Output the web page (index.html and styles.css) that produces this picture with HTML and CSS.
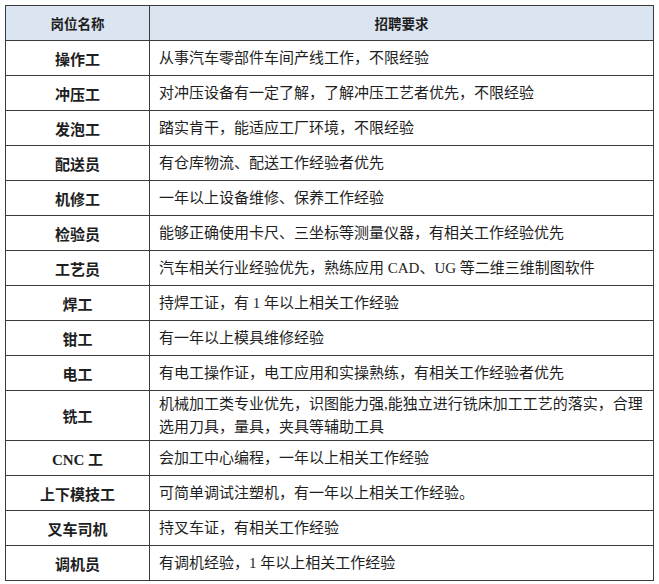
FILE: index.html
```html
<!DOCTYPE html>
<html lang="zh-CN">
<head>
<meta charset="utf-8">
<link rel="stylesheet" href="styles.css">
</head>
<body>
<div class="wrap">
<table class="jobs">
  <thead>
    <tr class="head"><th class="c1">岗位名称</th><th class="c2">招聘要求</th></tr>
  </thead>
  <tbody>
    <tr><td class="name">操作工</td><td class="req">从事汽车零部件车间产线工作，不限经验</td></tr>
    <tr><td class="name">冲压工</td><td class="req">对冲压设备有一定了解，了解冲压工艺者优先，不限经验</td></tr>
    <tr><td class="name">发泡工</td><td class="req">踏实肯干，能适应工厂环境，不限经验</td></tr>
    <tr><td class="name">配送员</td><td class="req">有仓库物流、配送工作经验者优先</td></tr>
    <tr><td class="name">机修工</td><td class="req">一年以上设备维修、保养工作经验</td></tr>
    <tr><td class="name">检验员</td><td class="req">能够正确使用卡尺、三坐标等测量仪器，有相关工作经验优先</td></tr>
    <tr><td class="name">工艺员</td><td class="req">汽车相关行业经验优先，熟练应用 CAD、UG 等二维三维制图软件</td></tr>
    <tr><td class="name">焊工</td><td class="req">持焊工证，有 1 年以上相关工作经验</td></tr>
    <tr><td class="name">钳工</td><td class="req">有一年以上模具维修经验</td></tr>
    <tr><td class="name">电工</td><td class="req">有电工操作证，电工应用和实操熟练，有相关工作经验者优先</td></tr>
    <tr class="tall"><td class="name">铣工</td><td class="req">机械加工类专业优先，识图能力强,能独立进行铣床加工工艺的落实，合理<br>选用刀具，量具，夹具等辅助工具</td></tr>
    <tr><td class="name">CNC 工</td><td class="req">会加工中心编程，一年以上相关工作经验</td></tr>
    <tr><td class="name">上下模技工</td><td class="req">可简单调试注塑机，有一年以上相关工作经验。</td></tr>
    <tr><td class="name">叉车司机</td><td class="req">持叉车证，有相关工作经验</td></tr>
    <tr><td class="name">调机员</td><td class="req">有调机经验，1 年以上相关工作经验</td></tr>
  </tbody>
</table>
</div>
</body>
</html>
```

FILE: styles.css
```css
html, body {
  margin: 0;
  padding: 0;
  background: #ffffff;
}
.wrap {
  padding: 5px 0 0 5px;
}
.jobs {
  border-collapse: collapse;
  width: 649px;
  table-layout: fixed;
  color: #1e1e1e;
  font-family: "Liberation Serif", "Noto Sans CJK SC", sans-serif;
}
.jobs th,
.jobs td {
  border: 1px solid #3a3a3a;
  padding: 0;
  vertical-align: middle;
}
.jobs tr {
  height: 35px;
}
.jobs tr.tall {
  height: 50px;
}
.c1 {
  width: 143px;
}
.head th {
  background: #dbe5f1;
  font-family: "Noto Sans CJK SC", sans-serif;
  font-weight: 700;
  font-size: 13.5px;
  text-align: center;
}
.name {
  text-align: center;
  font-weight: 700;
  font-size: 15px;
  font-family: "Liberation Serif", "Noto Sans CJK SC", sans-serif;
}
.req {
  text-align: left;
  padding-left: 9px !important;
  font-size: 15px;
  line-height: 23px;
  font-weight: 400;
}
```
